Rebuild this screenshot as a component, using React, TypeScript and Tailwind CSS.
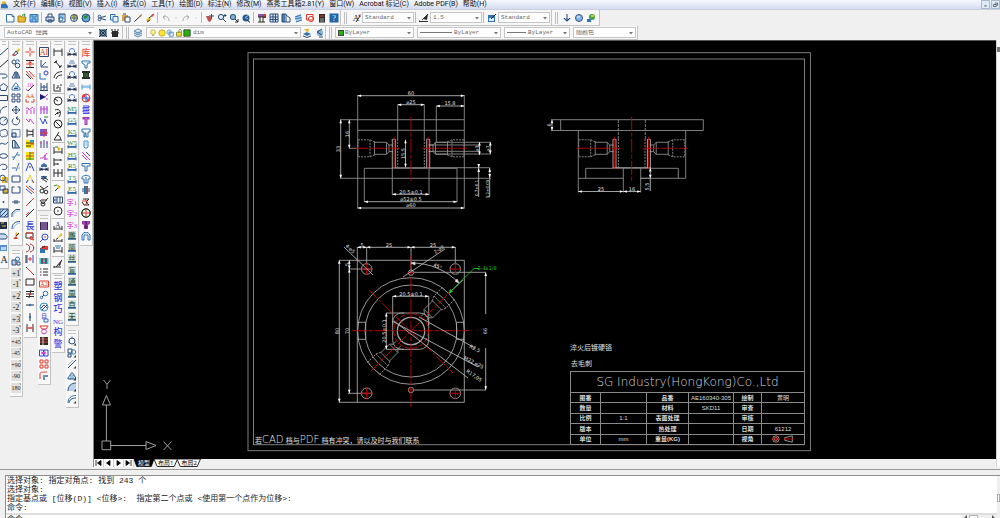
import { useState } from "react";
import type { ReactNode } from "react";

type Stroke = [color: string, d: string, fill?: boolean];
interface Glyph {
  name: string;
  paths: Stroke[];
  text?: { value: string; color: string; size: number; y: number };
}

const NAVY = "#2b4a78";
const BLUE = "#2f74b8";
const SKY = "#8ec3ee";
const RED = "#e8382c";
const PINK = "#d63cd6";
const GREEN = "#2c8a3a";
const INK = "#2c2c2c";
const GOLD = "#e9b92b";
const GRAY = "#a8a8a8";

const ring = (x: number, y: number, r: number) =>
  `M${x - r} ${y}a${r} ${r} 0 1 0 ${r * 2} 0a${r} ${r} 0 1 0 ${-r * 2} 0`;

const g = (name: string, ...paths: Stroke[]): Glyph => ({ name, paths });
const t = (name: string, value: string, color: string, size = 8, y = 8, ...paths: Stroke[]): Glyph => ({
  name, paths, text: { value, color, size, y },
});

const carBase: Stroke[] = [["#1c2c50", "M1 5.5V9M9 5.5V9M1 7.3H9"], ["#1c2c50", "M1 7.3L3.5 5.5V9ZM9 7.3L6.5 5.5V9Z", true]];
const blueBase: Stroke[] = [["#3566ad", "M1 6V9.4M9 6V9.4"], ["#3566ad", "M1 7H9V8.8H1Z", true]];

const STANDARD: Glyph[][] = [
  [
    g("新建", ["#ffffff", "M1.5 1H7L9 3V9H1.5Z", true], [BLUE, "M1.5 1.5H7L9 3.5V9H1.5ZM7 1.5V3.5H9"]),
    g("打开", [GOLD, "M1 3H4L5 4H9L8 9H1Z", true], ["#a97c12", "M1 3H4L5 4H9L8 9H1Z"], [GREEN, "M5 2.5L8 1L7.5 3.5"]),
    g("保存", [SKY, "M1 1H9V9H1Z", true], [BLUE, "M1 1.5H9V9H1ZM3 1.5V4H7V1.5M3 9V6H7V9"]),
  ],
  [
    g("打印", ["#c9d3e2", "M1 4H9V8H1Z", true], [NAVY, "M3 4V1H7L7 4M1 4H9V8H1ZM3 7H7V9H3Z"]),
    g("打印预览", [SKY, "M2 1H7V6H2Z", true], [NAVY, "M2 1H8V9H2Z"], [BLUE, ring(4, 6, 2)]),
    g("发布", [GOLD, ring(6, 4, 3), true], [NAVY, ring(5, 5, 3.5)], [BLUE, "M2 5H8M5 1.5V8"]),
    g("三维DWF", ["#5fa8dc", ring(5, 5, 4), true], [GREEN, "M3 3L7 2L6 5L3 6Z", true], [NAVY, ring(5, 5, 4)]),
  ],
  [
    g("剪切", [NAVY, "M4 4.5L9 3M4 5.5L9 7"], [NAVY, ring(2.5, 3.5, 1.3)], [NAVY, ring(2.5, 6.5, 1.3)]),
    g("复制", ["#e6f1fb", "M1 1H6V7H1Z", true], [BLUE, "M1.5 1.5H6V7H1.5Z"], ["#e6f1fb", "M4 3H9V9H4Z", true], [BLUE, "M4 3.5H9V9H4Z"]),
    g("粘贴", ["#d9a54a", "M1 2H7V8H1Z", true], ["#ffffff", "M4 4H9V9H4Z", true], [NAVY, "M4 4H9V9H4ZM2 1H5"]),
    g("特性匹配", [INK, "M1.5 8.5L8.5 2"], ["#b98a2c", "M6 3L9 1L8 4Z", true]),
    g("块编辑器", [GOLD, "M1 7L4 4L6 6L3 9Z", true], [INK, "M4 5L9 1M2 9L5 7"], [RED, "M6 2L9 1L8 4Z", true]),
  ],
  [
    g("放弃", [GRAY, "M8 8C8 4 6 3 2 4M2 4L4.5 2M2 4L4 6.5"]),
    g("放弃列表", [GRAY, "M4 4.5H6L5 6Z", true]),
    g("重做", [GRAY, "M2 8C2 4 4 3 8 4M8 4L5.5 2M8 4L6 6.5"]),
    g("重做列表", [GRAY, "M4 4.5H6L5 6Z", true]),
  ],
  [
    g("实时平移", [NAVY, "M4 3H9M6.5 1V6"], ["#c0504d", "M1 3H5L7 6L5 9L3 8Z", true]),
    g("实时缩放", ["#dcecfa", ring(4, 4, 3), true], [NAVY, ring(4, 4, 2.6)], [NAVY, "M6 6L9 9M8 1V4M6.5 2.5H9.5"]),
    g("窗口缩放", ["#7fb3df", ring(4, 4, 3), true], [NAVY, ring(4, 4, 2.6)], [INK, "M6 6L9 9M6 9H9V6"]),
    g("缩放上一个", ["#2b5a8c", ring(5, 5, 3.5), true], [SKY, "M8 2L4 4.5L7 6"], [INK, "M6 7L9 9.5"]),
  ],
  [
    g("特性", ["#8557a7", "M1 1H6V4H1Z", true], [RED, "M6 1H9V5H6Z", true], [INK, "M1 4H9M3 4V9M6 4V9M1 9H8"]),
    g("设计中心", ["#dce8f5", "M1 1H9V9H1Z", true], [NAVY, "M1 1H9V9H1ZM1 4H9M4 1V9M6.5 1V9M1 6.5H9"]),
    g("工具选项板", ["#4c78ad", "M1 1H4V9H1Z", true], [NAVY, "M1 1H5V9H1ZM5 2L9 5V9H5"]),
    g("图纸集", ["#9fc9e8", "M2 3L8 1L9 7L3 9Z", true], [BLUE, "M2 4L8 2M2 6L8.5 4.5M3 9L9 7"]),
    g("标记集", ["#ffffff", "M1 1H8V8H1Z", true], [RED, "M1.5 1.5H8V7H1.5Z"], [RED, ring(6, 6, 2.6)]),
    g("计算器", [INK, "M2 1H8V9.5H2Z", true], ["#8b2f2a", "M3 2H7V4H3Z", true], [GRAY, "M3 6H7M3 8H7"]),
  ],
  [t("帮助", "?", "#ffffff", 8, 8, ["#1f66a8", "M0.5 0.5H9.5V9.5H0.5Z", true])],
];

const EXPRESS: Glyph[] = [
  g("移动三维", ["#7fa9d8", "M5 9L1 5.5H9Z", true], [NAVY, "M5 1V8M2 5L5 8L8 5"]),
  g("旋转三维", ["#79b2e6", ring(5, 5, 3), true], [NAVY, ring(5, 5, 3.5)], ["#ffffff", "M3 4H6"]),
  g("对齐三维", ["#43a047", ring(6, 4, 3), true], [BLUE, "M1 6H5V9H1Z", true], [GOLD, "M5 2H8V4H5Z", true]),
];

const DRAW: Glyph[] = [
  g("直线", [NAVY, "M1 8L9 1"]),
  g("构造线", [INK, "M0 9L9 1"]),
  g("多段线", [NAVY, "M0 4H5C9 4 9 8 5 8H3"]),
  g("正多边形", [NAVY, "M4.5 1.5L8.5 4.5L7 8.5H2L0.5 4.5Z"]),
  g("矩形", [NAVY, "M0 2.5H8.5V7.5H0"]),
  g("圆弧", [NAVY, "M1 8.5C1 4 4 2 8 1.5"]),
  g("圆", [NAVY, ring(4.5, 5, 4)], [BLUE, "M4.5 5L7 3"]),
  g("修订云线", [NAVY, "M1 6C0 3 2 2 4 2C7 0 9 3 8 5C10 7 7 9 5 8C3 10 1 8 1 6"]),
  g("样条曲线", [NAVY, "M0 7C3 0 5 9 9 3"]),
  g("椭圆", [NAVY, "M0.5 5C1 2 8 2 8.5 5C8 8 1 8 0.5 5"]),
  g("椭圆弧", [NAVY, "M1 4C2 1 8 2 8 5C8 8 4 8 3 7"]),
  g("插入块", [GOLD, "M3 3H9V9H3Z", true], [NAVY, ring(3.5, 4, 2.8)], [BLUE, "M5 6L8 8"]),
  g("创建块", [GOLD, "M4 4H9V9H4Z", true], [NAVY, "M1 1H6V5H1ZM4 4H9V8H4Z"]),
  g("点", [NAVY, ring(4.5, 5, 1), true]),
  g("图案填充", ["#bcd8f2", "M1 1H9V9H1Z", true], [NAVY, "M1 9V1H9V9ZM1 5L5 1M1 9L9 1M5 9L9 5"]),
  g("渐变色", ["#1d2d4a", "M1 2H8V9H1Z", true], [GOLD, "M2 3H5M3 6H7"]),
  g("面域", ["#c9ddf0", ring(4, 5, 3.6), true], [NAVY, "M0 8V3H4C9 3 9 8 6 8Z"]),
  g("表格", ["#5a8fd0", "M0 2H8V8H0Z", true], ["#b8d4f5", "M2 4H7V7H2Z", true]),
  t("多行文字", "A", INK, 10, 9),
];

const MODIFY: Glyph[] = [
  g("删除", [GOLD, "M5 4L8 1L9 3L6 6Z", true], [NAVY, "M2 8L5 4L7 6L4 8.5Z"], [RED, "M1 8H4"]),
  g("复制对象", [NAVY, ring(3, 3, 2)], [NAVY, ring(6.5, 6.5, 2.3)], [BLUE, "M5 1H8V3"]),
  g("镜像", [SKY, "M6 8V2L9 8Z", true], [NAVY, "M4 8V2L1 8ZM6 8V2L9 8ZM5 1V9"]),
  g("偏移", [SKY, "M3 6H7V4H4Z", true], [BLUE, "M1 8H9C9 5 8 5 7 5C7 0 3 0 3 4C1 4 1 6 1 8Z"], [NAVY, "M3 6.5H7"]),
  g("阵列", [NAVY, "M1 1H4V4H1ZM6 1H9V4H6ZM1 6H4V9H1ZM6 6H9V9H6Z"]),
  g("移动", [NAVY, "M5 1V9M1 5H9M3.5 2.5L5 1L6.5 2.5M3.5 7.5L5 9L6.5 7.5M2.5 3.5L1 5L2.5 6.5M7.5 3.5L9 5L7.5 6.5"]),
  g("旋转", [NAVY, "M2.5 2.5C-1 6 3 10 6.5 8.5C10 6 9 2 5 2M5 2L7 0.5M5 2L7 4"]),
  g("缩放", ["#c6dcf2", "M1 5H5V9H1Z", true], ["#6f8fb4", "M1 1.5H9V9H1Z"], [NAVY, "M1 5H5V9H1Z"]),
  g("拉伸", ["#9fc4e8", "M4 2L9 9H4Z", true], [NAVY, "M1.5 1.5H4L8.5 9H1.5ZM4 2V9"]),
  g("修剪", [BLUE, "M1 6H4M6 4H9M2 9L7 1"]),
  g("延伸", [BLUE, "M1 6H5M5 9L8 1"], [GRAY, "M6 6H9"]),
  g("打断于点", [NAVY, "M1 2H9V8H1Z"], [SKY, "M4 2H6"]),
  g("打断", [NAVY, "M3.5 2H1V8H9V2H6.5"]),
  g("合并", [NAVY, "M1 5H9M4 3V7M6 3V7"]),
  g("倒角", [NAVY, "M1 9V5L5 1.5H9"], [SKY, "M2 9V6L6 3H9"]),
  g("圆角", [NAVY, "M1 9C1 4 4 1.5 9 1.5"], [SKY, "M2.5 9C3 6 5 3.5 9 3"]),
  g("分解", [RED, "M2 8L5 5L7 8Z", true], [GOLD, "M5 1L8 3L6 6L4 4Z", true], [INK, "M5 5L8 2"]),
];

const ROTATE: Glyph[] = [
  g("旋转工具", ["#b9d7f1", "M1 4H5V9H1Z", true], [BLUE, ring(6.5, 3, 2)], [NAVY, "M1 4H5V9H1ZM6 6H9V9H6Z"]),
  ...["+1", "-1", "+2", "-2", "+3", "-3"].map((s) =>
    t(`偏移 ${s}`, s, "#222222", 8, 7.5, ["#e2e0dc", "M0 0H10V10H0Z", true], [INK, "M8 0.5H9.5V2Z", true])),
  ...["+45", "-45", "+90", "-90", "180"].map((s) =>
    t(`旋转 ${s}`, s, "#222222", 6, 7, ["#e2e0dc", "M0 0H10V10H0Z", true], [INK, "M8.5 0.5H9.5V2Z", true])),
];

const YANXIU: Glyph[] = [
  g("中心线", [RED, "M5 0.5V4M5 6V9.5M0.5 5H4M6 5H9.5M4.5 5H5.5"]),
  g("对称线", [INK, "M1 1.5H9M1 8.5H9"], [RED, "M1 5H9M5 2V8M3.5 3.5H6.5"]),
  g("平行线", [RED, "M1 1L8 9M4 1L9.5 7"], [INK, "M1 4L6 9"]),
  t("长度", "10", PINK, 6, 4.5, [INK, "M3 9L9 3"], [PINK, "M1 7L3 9"]),
  t("字高", "AA", RED, 6, 5, [RED, "M1 6V9H4M9 6V9H6"]),
  g("折线一", [PINK, "M1 3H3L4 5L8 2M2 9V5M6 9V5M9 9V3"]),
  g("折线二", [PINK, "M1 3L4 6L5 3L9 8"]),
  g("管道", [INK, "M2 1V9M8 1V9M2 3L8 3.5M2 7L8 6.5"]),
  g("图层一", ["#ffe600", "M1 1H9V9H1Z", true], ["#29a0d8", "M5 1H9V3H5Z", true], [INK, "M1 4H9M1 7H6"], [RED, "M5 5H9"]),
  g("图层二", ["#ffe600", "M1 1H9V9H1Z", true], [RED, "M4 2H9M1 5H9"], [GREEN, "M1 8H9M5 1V9"]),
  g("角度一", ["#3046d8", "M1 9L4 1L6 2L9 9"], [INK, "M4 5H6"]),
  g("角度二", ["#f2d21f", "M2 9L5 1L8 9"], ["#3046d8", "M1 9L3 6M9 9L7 6"]),
  g("斜线", [RED, "M1 1L9 8"], ["#3046d8", "M1 4L7 9M4 1L9 5"]),
  g("线一", [RED, "M1 9L9 1"], [INK, "M4 6L6 4"]),
  g("线二", [INK, "M1 9L9 1"], [RED, "M1 7L4 4"]),
  t("长", "長", "#4040e0", 9, 8.5),
  g("框选", [INK, "M1 2H8V7H1Z"], [RED, "M1 2H8M6 5L9 9L5 8Z"]),
  g("括弧", ["#9c2a2a", "M1 1C6 2 6 8 1 9M5 1C10 2 10 8 5 9"]),
  g("等分一", ["#3046d8", "M2 1V9M8 1V9"], [RED, "M3 5H7M5 3V7"], [INK, "M1 1V9"]),
  g("斜连", [INK, "M1 1L9 9"], [RED, "M2 2L8 8"]),
  g("框", [INK, "M1 2H9V8H1Z"], [RED, ring(9, 2, 0.7), true], [RED, ring(1, 8, 0.7), true]),
  g("三线", [INK, "M1 2.5H9M1 5H9M1 7.5H9M6 1L4 9"], [RED, "M3 5H6"]),
  g("中点", [INK, "M1 5H9"], [BLUE, ring(5, 5, 1.2), true]),
  g("竖中点", [INK, "M5 1V9"], [BLUE, ring(5, 5, 1.2), true]),
  g("夹线", [INK, "M2 1V9M8 1V9"], [RED, "M2 5H8M4 4V6M6 4V6"]),
];

const TEXTTOOLS: Glyph[] = [
  t("文字替换", "AI", RED, 8, 8, [NAVY, "M0.5 0.5H9.5V9.5H0.5Z"]),
  g("坐标", [NAVY, "M2 1V8H9"], [BLUE, "M2 8L7 3"]),
  g("编号圆", [BLUE, "M1 3V9H7"], ["#3046d8", ring(7, 3, 2)]),
  g("基线", [NAVY, "M1 8.5H9M2 1V8M5 3V8M8 1V8M2 5H8"]),
  g("焊接", ["#1b1b80", "M1 1V7L7 4Z", true], [PINK, "M6 4L9 1M7 6H9"]),
  g("分段", ["#8a2be2", "M2 1V9M5 1V9M8 1V9"], [PINK, "M1 4H9"]),
  g("粗糙度", ["#3046d8", "M1 2L4 8L6 3L8 8"], [GREEN, "M5 1H9"]),
  g("网格", ["#7a5ad0", "M1 1H8V8H1Z", true], [RED, "M1 5H9M5 1V9"]),
  g("箭头组", [NAVY, "M2 2V9M5 1V9M8 2V9"], [PINK, "M1 4H3M7 4H9"]),
  g("拐点", [PINK, "M1 7H4L8 2M5 8H9"], ["#8a2be2", "M6 4V9"]),
  g("车一", ["#3f6da8", "M2 3L5 1L8 3V5H2Z", true], ...carBase),
  g("车二", ["#3f6da8", "M2 2H8L7 5H3Z", true], [INK, "M2 4L8 8M4 2L9 6"]),
  g("查找", [INK, ring(3, 6, 2)], [INK, ring(7, 7, 1.8)], [INK, "M1 1L5 4L9 1"]),
  g("勾选", [INK, "M1 3L4 7L9 1M2 3H8"], [INK, ring(4, 7, 2)]),
];

const LAYOUTTOOLS: Glyph[] = [
  g("条码", ["#3b2250", "M1 1H9V9H1Z", true], ["#b28bd0", "M3 1V9M5 1V9M7 1V9"]),
  g("放大", ["#3046d8", ring(6, 4, 3)], ["#3046d8", "M4 6L1 9"], [RED, "M5 4H7"]),
  g("色块", [RED, "M3 2H9V6H3Z", true], [BLUE, "M1 5H6V9H1Z", true], [INK, "M1 5L6 2"]),
  g("符号", ["#45c1d8", "M0.5 2H9.5V8H0.5Z", true], [RED, ring(5, 5, 2)], [INK, "M3 2V8M7 2V8"]),
  g("列表", [INK, "M1 2H2.5M4 2H9M1 5H2.5M4 5H9M1 8H2.5M4 8H9"]),
  t("编号", "A2", RED, 6, 7, [RED, "M0.5 2H9.5V8H0.5Z"]),
  g("连接", [BLUE, ring(6.5, 3.5, 2.3)], [BLUE, ring(2.5, 7.5, 1.2)], [NAVY, "M3 7L5 5"]),
  g("转动", ["#2b8fd0", ring(5, 5, 4)], [NAVY, "M2 6L5 3L8 6M3 8L8 3"]),
  t("自动", "自", "#7048d8", 6, 5, [BLUE, "M5 6H9V9H5Z"]),
  g("漏斗", [RED, "M1 1H9L7 4H3Z"], [PINK, ring(5, 6.5, 2.4)]),
  g("表头", [INK, "M1 1H9V9H1Z", true], [RED, "M1 3H9M1 6H9"], ["#cccccc", "M4 1V9"]),
  g("双联", ["#3046d8", "M0.5 2H4.5V8H0.5ZM5 2H9V8H5Z"], [PINK, "M2 4L7 6M2 6L7 4"]),
  g("四框", [RED, "M1 1H4V4H1ZM6 1H9V4H6ZM1 6H4V9H1ZM6 6H9V9H6Z"]),
  g("钩形", ["#6d8fb5", "M4 4H9V6H6V9H4Z", true], [RED, "M1 8V3C1 1 3 1 8 1"]),
];

const DIM: Glyph[][] = [
  [
    g("线性", [INK, "M1 1.5V9M9 1.5V9M1 4H9"]),
    g("对齐", [INK, "M3 3L7 8M1 4L4 1.5M6 9L9 6.5"], [INK, ring(3, 3, 1), true], [INK, ring(7, 7.5, 1), true]),
    g("弧长", [INK, "M1 8C2 3 5 2 9 1.5M3 9C4 6 6 5 9 5"]),
    g("坐标标注", [INK, "M1 2V9H8M3 6H5V3M7 5V8M7 3H9"]),
  ],
  [
    g("半径", [INK, ring(5, 5, 4)], [INK, "M5 5L2 3"]),
    g("折弯", [INK, "M2 2C7 0 9 4 6 9M2 7L5 4L4 6L7 4"]),
    g("直径", [INK, ring(5, 5, 4)], [INK, "M2 2L8 8"]),
    g("角度", [INK, "M9 9H1L6 1M7 9C8 6 7 5 4 4"]),
  ],
  [
    g("快速标注", [INK, "M1 2V9M9 3V9M1 7H9"], [GOLD, "M4 1L8 4L5 6Z", true], [GREEN, "M2 2H5"]),
    g("基线标注", [INK, "M1 1V9M1 3H8M1 7H5M8 2V4M5 6V8"]),
    g("连续标注", [INK, "M1 1V9M5 1V9M9 1V9M1 5H9"]),
  ],
  [
    g("快速引线", [INK, "M2 8L7 3"], [GOLD, "M4 1L8 4L5 6Z", true], [GREEN, "M1 3L4 2"]),
    g("公差", [NAVY, "M0.5 2H9.5V8H0.5ZM4 2V8M7 2V8"], [BLUE, ring(2.3, 5, 1)]),
    g("圆心标记", [INK, ring(5, 5, 4)], [INK, ring(5, 5, 0.8), true]),
  ],
  [
    t("编辑标注", "A", NAVY, 8, 7, [INK, "M1 5V9M9 5V9M1 8H9"]),
    g("编辑文字", [INK, "M1 6V9M9 6V9M1 8H9"], [GOLD, "M4 6L8 0L9.5 2Z", true], [INK, "M3 6.5L5 5"]),
    g("更新标注", [INK, "M1 3V9M9 3V9M1 7H9"], [BLUE, "M2 2H8M3 4H7"]),
  ],
  [g("标注样式", [INK, "M1 7V9M1 8H8M3 8L9 1"], [INK, "M5 6L9 1L7 7Z", true])],
];

const HANZI: Glyph[] = ["塑", "钢", "巧", "NG", "构", "警"].map((s) => t(s, s, "#3b3be0", s === "NG" ? 7 : 9, 8.3));

const CARS: Glyph[] = [
  ...["线性", "半宽", "全长", "重置", "更新"].map((s, i) =>
    g(`标注${s}`, [i % 2 ? "#5f86bd" : "#3f77c0", i % 2 ? "M2 4H8M3 2H7" : "M2.5 5V3.5C2.5 1 7.5 1 7.5 3.5V5"], ...carBase)),
  ...["M", "G", "K", "W", "H", "R", "T", "E"].map((s) => t(`符号 ${s}`, s + "5", GREEN, 7, 5.5, ...blueBase)),
  ...["字1", "字2", "字3"].map((s) => t(s, s, "#e046e0", 7, 7.5)),
  ...["雕", "简", "丝", "盲", "通", "周", "自", "无"].map((s) =>
    t(`${s}孔`, s, "#2f5c3c", 7, 6.6, ["#d8ddd8", "M1 0H9V7H1Z", true], ...blueBase.slice(1))),
];

const SNAP: Glyph[] = [
  g("圆阵", [NAVY, ring(5, 5, 3)], [BLUE, "M5 0.5V3M1 6H3"], [INK, "M9 7V9.5H6.5Z", true]),
  g("排列", [NAVY, "M1 1H5V5H1ZM1 6H4V9H1Z"], [BLUE, ring(6.5, 4, 2.2)], [INK, "M9 7V9.5H6.5Z", true]),
  g("斜切", [NAVY, "M1 9L9 1"], [GRAY, "M1 6L6 1"], [INK, "M9 7V9.5H6.5Z", true]),
  g("凸台", [SKY, "M2 8L5 2L8 8Z", true], [NAVY, "M1 8C1 5 3 5 3 5C3 1 7 1 7 5C9 5 9 8 8 8Z"], [INK, "M9 7V9.5H6.5Z", true]),
  g("倒圆一", ["#b6d2ee", "M1 9C1 4 4 1 9 1V9Z", true], [NAVY, "M1 9C1 4 4 1 9 1"], [INK, "M9 7V9.5H6.5Z", true]),
  g("倒圆二", [BLUE, "M1 9C1 4 4 1.5 9 1.5"], [NAVY, "M2 9C2 6 5 4 9 4"], [INK, "M9 7V9.5H6.5Z", true]),
];

const MOLD: Glyph[] = [
  t("模架库", "库", "#f04a43", 9, 8.5),
  g("螺钉一", [BLUE, "M1 2H9V4H7L6 6V9H4V6L1 4Z"], [SKY, "M3 3H7"]),
  g("模仁", [INK, "M1 1H9V3H8V7H9V9H1V7H2V3H1Z", true], [GREEN, "M3 4H7M3 6H7"]),
  g("水路", ["#3e94dc", "M1 2.5V7.5M9 2.5V7.5M1 5H9"], [SKY, "M2 4H8"]),
  g("浇口", [RED, ring(5, 5, 4)], ["#3046d8", "M5 1V9M1 5H9"], [RED, "M2 2H4V4H2ZM6 6H8V8H6Z", true]),
  g("弹簧", ["#4b4bea", "M2 1H8V2.5H2V4H8V5.5H2V7H8V8.5H2"]),
  g("螺丝", ["#9f3faf", "M1.5 1H8.5V3.5H6.5V9H3.5V3.5H1.5Z", true], ["#d38be0", "M5 2V8"]),
  g("顶针", [BLUE, "M1 1H9V4H7V9H5V5H4V9H3V4H1Z"]),
  g("拉杆", ["#3e94dc", "M3 2H7V8L6 9H4L3 8Z"], [SKY, "M5 3V7"]),
  g("斜顶", [PINK, "M1 1L9 9M1 4L6 9"], ["#3046d8", "M5 1L9 5"]),
  g("滑块", [BLUE, "M1 1.5H9V4H6V9H4V4H1Z"]),
  g("定位圈", [BLUE, "M1 5V3C2 1 8 1 9 3V5H7V9H3V5ZM5 3V9"]),
  g("导柱", ["#1d79a8", "M3 1H7V9H3Z", true], [NAVY, "M2 3V7M8 3V7"], [RED, "M5 1V9"]),
  g("冷却", [INK, "M2 2H8L5 5L8 8H3L1 5"], [RED, "M4 2L7 6L3 8M1 4H5"]),
  g("定位", [GREEN, ring(5, 5, 4)], [RED, "M5 1V9M1 5H9"], [INK, ring(5, 5, 4.4)]),
  g("紫螺丝", ["#9f3faf", "M1 1H9V4L7 5V9H3V5L1 4Z", true], ["#3b2250", "M5 1V9M3 7H7"]),
  g("支架", [BLUE, "M1 9V4L3 1.5H7L9 4V9H7V4H3V9Z"], [SKY, "M5 1V4"]),
];

const MENUS = [
  "文件(F)", "编辑(E)", "视图(V)", "插入(I)", "格式(O)", "工具(T)", "绘图(D)", "标注(N)", "修改(M)",
  "燕秀工具箱2.81(Y)", "窗口(W)", "Acrobat 标记(C)", "Adobe PDF(B)", "帮助(H)",
];

function Icon({ glyph }: { glyph: Glyph }) {
  return (
    <svg viewBox="0 0 10 10" className="size-[10px]" aria-hidden="true">
      {glyph.paths.map(([color, d, fill], i) => (
        <path key={i} d={d} fill={fill ? color : "none"} stroke={fill ? "none" : color} strokeWidth={1} />
      ))}
      {glyph.text && (
        <text x={5} y={glyph.text.y} textAnchor="middle" fontSize={glyph.text.size} fill={glyph.text.color} className="font-['Liberation_Serif','Noto_Sans_CJK_SC',serif] font-medium">
          {glyph.text.value}
        </text>
      )}
    </svg>
  );
}

function ToolButton({ glyph, className = "" }: { glyph: Glyph; className?: string }) {
  return (
    <button type="button" aria-label={glyph.name} className={`flex shrink-0 items-center justify-center hover:bg-sky-200 ${className}`}>
      <Icon glyph={glyph} />
    </button>
  );
}

function Divider() {
  return <span className="mr-[2px] ml-px h-[11px] w-px shrink-0 bg-[#b9b9b9]" />;
}

function Grip() {
  return (
    <span className="mx-[3px] flex h-3 shrink-0 gap-px">
      <span className="w-px bg-[#c0c0c0]" />
      <span className="w-px bg-[#c0c0c0]" />
    </span>
  );
}

function Toolbar({ children }: { children: ReactNode }) {
  return <div className="flex h-full shrink-0 items-center border-r border-b border-[#c4c4c4] bg-[#f7f7f7]">{children}</div>;
}

interface DropProps {
  label: string;
  options: string[];
  className: string;
  children?: ReactNode;
}

function Drop({ label, options, className, children }: DropProps) {
  return (
    <div className={`flex h-[11px] shrink-0 items-center gap-px border border-[#c6c6c6] bg-white pl-[2px] ${className}`}>
      {children}
      <select
        aria-label={label}
        className="h-full min-w-0 flex-1 appearance-none bg-transparent font-['Liberation_Mono','Noto_Sans_CJK_SC',monospace] text-[6px] leading-none text-[#666] outline-none"
      >
        {options.map((o) => <option key={o}>{o}</option>)}
      </select>
      <svg viewBox="0 0 6 6" className="mr-px size-[6px] shrink-0" aria-hidden="true"><path d="M1 2H5L3 4.5Z" fill="#777" /></svg>
    </div>
  );
}

function Palette({ groups }: { groups: Glyph[][] }) {
  return (
    <div role="toolbar" className="flex flex-col items-center border-r border-b border-[#c3c3c3] bg-[#f8f8f8] pb-[3px]">
      <div className="mb-px flex h-1 w-full flex-col justify-between px-[2px]">
        <span className="h-px bg-[#c4c4c4]" />
        <span className="h-px bg-[#c4c4c4]" />
      </div>
      {groups.map((group, i) => (
        <div key={i} className={i > 0 ? "mt-px border-t border-[#bdbdbd] pt-px" : ""}>
          {group.map((glyph) => <ToolButton key={glyph.name} glyph={glyph} className="h-3 w-3 even:h-[11px]" />)}
        </div>
      ))}
    </div>
  );
}

const W = "#b4b4b4";

function Label({ x, y, rotate = 0, size = 5, color = "#e0e0e0", children }: { x: number; y: number; rotate?: number; size?: number; color?: string; children: ReactNode }) {
  return (
    <text x={x} y={y} fontSize={size} fill={color} stroke="none" textAnchor="middle" transform={rotate ? `rotate(${rotate} ${x} ${y})` : undefined}>
      {children}
    </text>
  );
}

/* Dimension line between two points with filled arrow heads at both ends */
function Dim({ x1, y1, x2, y2 }: { x1: number; y1: number; x2: number; y2: number }) {
  const angle = (Math.atan2(y2 - y1, x2 - x1) * 180) / Math.PI;
  return (
    <g stroke={W}>
      <path d={`M${x1} ${y1}L${x2} ${y2}`} />
      <path d="M0 0L3.5 -1.3V1.3Z" fill="#fff" stroke="none" transform={`translate(${x1} ${y1}) rotate(${angle})`} />
      <path d="M0 0L-3.5 -1.3V1.3Z" fill="#fff" stroke="none" transform={`translate(${x2} ${y2}) rotate(${angle})`} />
    </g>
  );
}

/* Nozzle profile pointing left, measured from the part's centre */
function Nozzle({ transform }: { transform: string }) {
  return (
    <g transform={transform} stroke="#8c8c8c">
      <path d="M-53 -8.5H-41V8.5H-53ZM-41 -8.5L-36.5 -6.5M-41 8.5L-36.5 6.5" strokeDasharray="2 1" />
      <path d="M-36.5 -7V7M-36.5 -6H-24.5V6H-36.5M-24.5 -6L-22 -3.3H-18M-24.5 6L-22 3.3H-18M-22 -3.3V3.3" />
    </g>
  );
}

function SideBores({ cx }: { cx: number }) {
  return (
    <g>
      <Nozzle transform={`translate(${cx} 148.3)`} />
      <Nozzle transform={`translate(${cx} 148.3) scale(-1 1)`} />
      <g stroke={W}>
        <path d={`M${cx - 18.7} 168V139.3H${cx - 15.7}V168M${cx + 18.7} 168V139.3H${cx + 15.7}V168`} />
        <path d={`M${cx - 13.3} 139V168M${cx + 13.3} 139V168`} strokeDasharray="2 1" stroke="#8c8c8c" />
      </g>
      <g stroke="#c80000">
        <path d={`M${cx - 17} 137V169M${cx + 17} 137V169`} />
        <path d={`M${cx - 55} 148.3H${cx - 11.5}M${cx + 11.5} 148.3H${cx + 56}`} strokeDasharray="12 1.5 3 1.5" />
        <path d={`M${cx} 116.7V181.3`} strokeDasharray="14 2 4 2" />
      </g>
    </g>
  );
}

function FrontView() {
  return (
    <g>
      <g stroke="#8c8c8c">
        <path d="M340 119.7H464.3M357.7 130.3H464.3M357.7 95V208.5M464.3 95V208.5M340 178.3H491" />
        <path d="M364.3 202V168.3H457V202M392.3 195V168M429 195V168M392 167.7H490" />
        <path d="M397.7 104.5V139M424.3 104.5V139M436.3 106V142M349 148.3H357" />
        <path d="M436 142.3H491M428 145H480M428 151.3H480M436 154H491" />
      </g>
      <SideBores cx={411} />
      <Dim x1={357.7} y1={95.7} x2={464.3} y2={95.7} />
      <Dim x1={397.7} y1={104.7} x2={424.3} y2={104.7} />
      <Dim x1={436.3} y1={106} x2={464.3} y2={106} />
      <Dim x1={340.7} y1={119.7} x2={340.7} y2={178.3} />
      <Dim x1={349.3} y1={119.7} x2={349.3} y2={148.3} />
      <Dim x1={405.5} y1={139.7} x2={405.5} y2={167.3} />
      <Dim x1={392.3} y1={194.3} x2={429} y2={194.3} />
      <Dim x1={364.3} y1={201.7} x2={457} y2={201.7} />
      <Dim x1={357.7} y1={208} x2={464.3} y2={208} />
      <Dim x1={479.5} y1={142} x2={479.5} y2={155} />
      <Dim x1={490.3} y1={142} x2={490.3} y2={154} />
      <path d="M478.7 164V197M489.7 168V197" stroke={W} />
      <path d="M478.7 168L477.4 172H480ZM478.7 168L477.4 164H480ZM489.7 168L488.4 172H491ZM489.7 178L488.4 174H491Z" fill="#fff" stroke="none" />
      <Label x={411} y={95}>60</Label>
      <Label x={411} y={104}>⌀25</Label>
      <Label x={450} y={105}>15,8</Label>
      <Label x={340} y={149} rotate={-90}>33</Label>
      <Label x={348.5} y={134} rotate={-90}>16</Label>
      <Label x={404.5} y={153.5} rotate={-90}>15,5</Label>
      <Label x={411} y={193.5}>20,5±0,1</Label>
      <Label x={411} y={201}>⌀52±0,5</Label>
      <Label x={411} y={207.3}>⌀60</Label>
      <Label x={478.5} y={148.5} rotate={-90}>⌀3</Label>
      <Label x={489.5} y={148.5} rotate={-90}>⌀7</Label>
      <Label x={477.5} y={188} rotate={-90} size={4}>0,7±0,1</Label>
      <Label x={488.7} y={189} rotate={-90} size={4}>5,2±0,05</Label>
    </g>
  );
}

function SideView() {
  return (
    <g>
      <g stroke="#8c8c8c">
        <path d="M551 119.7H703.3V130.5H551M560.7 119.7V130.5M578.3 130.5V192.5M685.7 130.5V178.3" />
        <path d="M578.3 178.3H623.3M640.7 178.3H685.7M585.7 178.3V168.3H678.3V178.3M613 167.5H651M623.3 168V192.5M640.7 168V192.5M640 178.3H651" />
        <path d="M618.3 120V139M645.3 120V139" strokeDasharray="3 1" />
      </g>
      <SideBores cx={631.7} />
      <Dim x1={552} y1={119.7} x2={552} y2={130.5} />
      <Dim x1={578.3} y1={191.5} x2={623.3} y2={191.5} />
      <Dim x1={623.3} y1={191.5} x2={640.7} y2={191.5} />
      <Dim x1={650.3} y1={168} x2={650.3} y2={178.3} />
      <path d="M650.3 178V191" stroke={W} />
      <Label x={551} y={125} rotate={-90}>6</Label>
      <Label x={601} y={191}>25</Label>
      <Label x={632} y={191}>16</Label>
      <Label x={649} y={186.5} rotate={-90}>5,5</Label>
    </g>
  );
}

function PlanView() {
  const holes = [[366.7, 269], [455.3, 269], [366.7, 393.3], [455.3, 393.3]];
  return (
    <g>
      <g stroke="#a6a6a6">
        <path d="M339 260.3H464.3V402.3H339M357.3 247V402.3M348 269H372M348 393.3H372M366.7 247V264M411 247V270M455.3 247V264" />
        <circle cx={411} cy={331} r={53.3} />
        <circle cx={411} cy={331} r={46} />
        <path d="M357.3 322.3H365.7V339.3H357.3M464.3 322.3H456.5V339.3H464.3" />
        <rect x={392.7} y={313} width={36} height={36.3} rx={9} />
        <circle cx={411} cy={331} r={13.7} strokeWidth={1.3} />
        {holes.map(([x, y]) => <circle key={`${x}-${y}`} cx={x} cy={y} r={5.3} />)}
        <circle cx={411} cy={272.7} r={2.7} />
        <circle cx={411} cy={390} r={2.7} />
        <path d="M392.7 296V325M428.7 296V325M386 313H404M386 349.3H404M411 272.3H486M414 390H486" />
      </g>
      <Nozzle transform="translate(411 331) rotate(-45)" />
      <Nozzle transform="translate(411 331) rotate(135)" />
      <g stroke="#c80000">
        <path d="M352.7 330.7H469.3M411 255V408" strokeDasharray="14 2 4 2" />
        <path d="M369 290L453 373M371 371L449 293" strokeDasharray="12 2 3 2" />
        <circle cx={411} cy={331} r={17.3} strokeDasharray="5 2" />
        {holes.map(([x, y]) => <path key={`${x}-${y}`} d={`M${x - 6} ${y}H${x + 6}M${x} ${y - 6}V${y + 6}`} />)}
        <path d="M408 272.7H414M408 390H414" />
      </g>
      <Dim x1={357.3} y1={247.3} x2={366.7} y2={247.3} />
      <Dim x1={366.7} y1={247.3} x2={411} y2={247.3} />
      <Dim x1={411} y1={247.3} x2={455.3} y2={247.3} />
      <Dim x1={339.3} y1={260.3} x2={339.3} y2={402.3} />
      <Dim x1={349.3} y1={260.3} x2={349.3} y2={269} />
      <Dim x1={349.3} y1={269} x2={349.3} y2={393.3} />
      <Dim x1={392.7} y1={296.3} x2={428.7} y2={296.3} />
      <Dim x1={386.3} y1={313} x2={386.3} y2={349.3} />
      <path d="M485.7 272.5V314M485.7 348V390" stroke={W} />
      <path d="M485.7 272.3L484.4 276H487ZM485.7 390L484.4 386.3H487Z" fill="#fff" stroke="none" />
      <g stroke={W}>
        <path d="M344 247L373 275M403 277L445 249M411 263C430 263 446 270 459 283" />
        <path d="M419 317L475 348M392 321L478 367M394 321L468 378M449 293L463 280" />
        <path d="M411 263L415 262V265ZM459 283L455 281.3L457 279Z" fill="#fff" />
      </g>
      <g stroke="#20c020">
        <path d="M449 293L474 268.5H479" />
        <path d="M449 293L450.5 289.5L452.5 291.5Z" fill="#20c020" />
      </g>
      <Label x={362} y={246.5}>5</Label>
      <Label x={389} y={246.5}>25</Label>
      <Label x={433} y={246.5}>25</Label>
      <Label x={338.5} y={331} rotate={-90}>80</Label>
      <Label x={348.5} y={331} rotate={-90}>70</Label>
      <Label x={348.5} y={264.5} rotate={-90}>5</Label>
      <Label x={487} y={331} rotate={-90}>66</Label>
      <Label x={411} y={295.5}>20,5±0,1</Label>
      <Label x={385.5} y={331} rotate={-90}>20,5±0,1</Label>
      <Label x={349} y={250} rotate={43}>4-⌀5</Label>
      <Label x={440} y={251} rotate={-33}>2-⌀2</Label>
      <Label x={437} y={268} rotate={22}>45°</Label>
      <Label x={474} y={350} rotate={27}>R2,5</Label>
      <Label x={473} y={364} rotate={27}>M22,⌀25</Label>
      <Label x={473} y={377} rotate={35}>R17,05</Label>
      <Label x={487} y={270} color="#20c020">2-4x1/8</Label>
    </g>
  );
}

const TITLE_ROWS: [string, string, string, string, string, string][] = [
  ["图番", "", "品番", "AE160340-305", "绘制", "黄明"],
  ["数量", "", "材料", "SKD11", "审查", ""],
  ["比例", "1:1", "表面处理", "", "审核", ""],
  ["版本", "", "热处理", "", "日期", "61212"],
  ["单位", "mm", "重量(KG)", "", "视角", "symbol"],
];

function TitleBlock() {
  return (
    <foreignObject x={570} y={371} width={235} height={74}>
      <table className="h-full w-full table-fixed border-collapse text-center font-['Liberation_Sans','Noto_Sans_CJK_SC',sans-serif] text-[6px] leading-none text-[#dcdcdc]">
        <colgroup>
          <col className="w-[30px]" />
          <col className="w-[46px]" />
          <col className="w-[42px]" />
          <col className="w-[45px]" />
          <col className="w-[28px]" />
          <col />
        </colgroup>
        <thead>
          <tr>
            <th colSpan={6} className="h-[21px] border border-[#8a8a8a] p-0 font-['DejaVu_Sans',sans-serif] text-[12px] font-extralight text-[#d8d8d8]">
              SG Industry(HongKong)Co.,Ltd
            </th>
          </tr>
        </thead>
        <tbody>
          {TITLE_ROWS.map((row) => (
            <tr key={row[0]} className="h-[10px]">
              {row.map((cell, i) => (
                <td key={i} className={`border border-[#8a8a8a] p-0 whitespace-nowrap ${i % 2 === 0 ? "font-bold" : ""}`}>
                  {cell === "symbol" ? (
                    <svg viewBox="0 0 26 9" className="mx-auto h-2 w-[26px]" aria-label="第一角投影" fill="none" stroke="#c8c8c8" strokeWidth={0.8}>
                      <circle cx={5} cy={4.5} r={3.6} />
                      <circle cx={5} cy={4.5} r={1.8} />
                      <path d="M15 3L23.5 1V8L15 6Z" />
                      <path d="M0.5 4.5H9.5M5 0V9M14 4.5H25" stroke="#e00000" strokeWidth={1} />
                    </svg>
                  ) : cell}
                </td>
              ))}
            </tr>
          ))}
        </tbody>
      </table>
    </foreignObject>
  );
}

function Drawing() {
  return (
    <svg viewBox="94 41 902 418" className="block h-full w-full font-['DejaVu_Sans','Noto_Sans_CJK_SC',sans-serif]" fill="none" strokeWidth={0.9}>
      <rect x={248} y={52.7} width={562.4} height={398} stroke="#8a8a8a" />
      <rect x={253.5} y={59} width={551} height={385.7} stroke="#8a8a8a" />
      <FrontView />
      <SideView />
      <PlanView />
      <TitleBlock />
      <g fill="#e2e2e2">
        <text x={570} y={350} fontSize={7}>淬火后镀硬铬</text>
        <text x={571} y={366} fontSize={7}>去毛刺</text>
        <text x={255} y={443} fontSize={7}>
          若<tspan fontSize={10} className="font-extralight">CAD</tspan> 档与<tspan fontSize={10} className="font-extralight">PDF</tspan> 档有冲突，请以及时与我们联系
        </text>
      </g>
      <g stroke="#b0b0b0">
        <path d="M102 441H110.7V449.7H102ZM106.4 441V405M102.5 405H110.5L106.4 395.5ZM110.7 445.5H146M146 441.5V449.5L156 445.5Z" />
        <path d="M103.5 380L107 384.3L110.5 380M107 384.3V389M163.5 441.5L171.5 450M171.5 441.5L163.5 450" />
      </g>
    </svg>
  );
}

function LayoutTabs() {
  const [active, setActive] = useState("模型");
  const nav: [string, string][] = [
    ["第一个", "M2 1V7M7 1.5L3.5 4L7 6.5Z"],
    ["上一个", "M6 1.5L2.5 4L6 6.5Z"],
    ["下一个", "M3 1.5L6.5 4L3 6.5Z"],
    ["最后一个", "M7 1V7M2 1.5L5.5 4L2 6.5Z"],
  ];
  return (
    <div className="flex h-2 shrink-0 items-stretch bg-[#f0f0f0]">
      {nav.map(([name, d]) => (
        <button key={name} type="button" aria-label={name} className="w-[10px] border-r border-[#d0d0d0] bg-white">
          <svg viewBox="0 0 9 8" className="h-2 w-[9px]"><path d={d} fill="#000" stroke="#000" strokeWidth={0.8} /></svg>
        </button>
      ))}
      {["模型", "布局1", "布局2"].map((tab) => (
        <button
          key={tab}
          type="button"
          onClick={() => setActive(tab)}
          className={`relative px-1 text-[6px] leading-none ${tab === active ? "text-white" : "text-black"}`}
        >
          <svg viewBox="0 0 22 8" preserveAspectRatio="none" className="absolute inset-0 h-full w-full" aria-hidden="true">
            <path d="M0 0H22L19 7.5H3Z" fill={tab === active ? "#000" : "#fff"} stroke="#000" strokeWidth={0.8} />
          </svg>
          <span className="relative">{tab}</span>
        </button>
      ))}
    </div>
  );
}

function CommandWindow() {
  const history = [
    "选择对象: 指定对角点: 找到 243 个",
    "选择对象:",
    "指定基点或 [位移(D)] <位移>:  指定第二个点或 <使用第一个点作为位移>:",
    "命令:",
  ];
  return (
    <section className="shrink-0 bg-[#f0f0f0] font-['Liberation_Mono','Noto_Sans_CJK_SC',monospace] text-[8px] leading-[9px] text-[#222]">
      <div className="mt-[2px] h-px bg-[#9b9b9b]" />
      <div className="h-[5px]" />
      <div className="ml-[5px] flex border-t border-l border-[#8f8f8f] bg-white">
        <div className="min-w-0 flex-1">
          <div className="h-[37px] pl-px">
            {history.map((line, i) => <p key={i} className="whitespace-pre">{line}</p>)}
          </div>
          <div className="flex h-[5px] overflow-hidden border-t-2 border-[#dedede] pl-px">
            <label htmlFor="command">命令:</label>
            <input id="command" className="h-[9px] min-w-0 flex-1 outline-none" />
            <div className="flex h-[9px] w-[35px] justify-between bg-[#efefef]">
              <svg viewBox="0 0 6 9" className="w-[6px]"><path d="M5 0L2 3L5 6Z" fill="#555" /></svg>
              <span className="mr-3 w-[9px] border border-[#b5b5b5] bg-white" />
              <svg viewBox="0 0 6 9" className="w-[6px]"><path d="M1 0L4 3L1 6Z" fill="#555" /></svg>
            </div>
          </div>
        </div>
        <div className="w-[3px] bg-[#efefef] pt-[18px]"><div className="h-2 border border-[#aaa] bg-white" /></div>
      </div>
    </section>
  );
}

const dropIcons: Glyph[] = [
  g("开", ["#fff3a0", ring(5, 4, 3), true], ["#c7a21b", ring(5, 4, 3)], ["#777", "M4 8H6"]),
  g("冻结", ["#ffe535", ring(5, 5, 4), true], ["#b99a1c", ring(5, 5, 4)]),
  g("视口", ["#c9dceb", ring(4, 4, 3), true], [BLUE, "M4 4H9V9H4Z"], ["#7ba7c9", ring(4, 4, 3)]),
  g("锁定", ["#f2e53a", "M2 4H8V9H2Z", true], ["#6d7a22", "M2 4H8V9H2ZM5 4V2C5 0 8 0 8 2V4"]),
  g("颜色", ["#23b60a", "M1 1H9V9H1Z", true], ["#333", "M1 1H9V9H1Z"]),
];

const stylesIcons: Glyph[] = [
  t("文字样式", "A", INK, 9, 8, [INK, "M5 9L9 3"], ["#8b3a1d", "M7 3L9.5 1V4Z", true]),
  g("标注样式管理", [INK, "M0 7V9M0 8.5H9M3 7L9 1"], [INK, "M4 6L9 1L8 7Z", true]),
  g("表格样式", [BLUE, "M1 2H8V9H1Z", true], ["#dcebfa", "M2 5H7V8H2Z", true], [INK, "M4 6L9 1"]),
];
const wsIcons: Glyph[] = [
  g("工作空间设置", ["#7f95ab", "M1 1H9V9H1Z", true], ["#26384c", ring(5, 5, 2.6)], ["#26384c", "M1 1L9 9M9 1L1 9"]),
  g("我的工作空间", [INK, "M2 3H8V9H2Z", true], [INK, "M1 2H3M5 1V3M7 2H9M1 5H9"]),
];
const layerIcons: Glyph[] = [
  g("图层特性", ["#a9cbe6", "M1 5L5 3L9 5L5 7Z", true], ["#5d86ab", "M1 3L5 1L9 3L5 5ZM1 5L5 7L9 5M1 7L5 9L9 7"]),
  g("置为当前", [BLUE, "M1 6L5 4L9 6L5 8Z", true], [GOLD, "M2 1H7L6 5Z", true], [NAVY, "M1 8L5 9.5L9 8"]),
  g("上一个图层", ["#8db3d3", ring(6, 5, 3.2), true], [NAVY, "M8 1L3 4L8 7M5 9H9"]),
];

export default function App() {
  return (
    <div className="flex h-screen flex-col overflow-hidden bg-[#f0f0f0] font-['Open_Sans','Noto_Sans_CJK_SC',sans-serif]">
      <nav className="flex h-[10px] shrink-0 items-center gap-1 border-b border-[#c9cfdf] bg-gradient-to-b from-[#f5f8fd] to-[#d5dcf0] font-['Roboto','Noto_Sans_CJK_SC',sans-serif] text-[7px] leading-none whitespace-nowrap text-[#111]">
        <svg viewBox="0 0 10 10" className="ml-px size-2 shrink-0" aria-hidden="true">
          <path d="M1 1L5 0L9 9H1Z" fill={GOLD} />
          <path d="M0 4L6 3L9 7L8 9H0Z" fill={BLUE} />
        </svg>
        <div className="flex flex-1 gap-[5px]">
          {MENUS.map((m) => <button key={m} type="button" className="shrink-0 hover:bg-white">{m}</button>)}
        </div>
        <div className="flex gap-px">
          {[["最小化", "M3 7H7"], ["还原", "M4 3H8V6H6M2 5H6V8H2Z"]].map(([name, d]) => (
            <button key={name} type="button" aria-label={name} className="size-[9px] border border-[#a9bccf] bg-[#dfeaf5]">
              <svg viewBox="0 0 10 10"><path d={d} fill="none" stroke="#5b6b7c" strokeWidth={1.4} /></svg>
            </button>
          ))}
        </div>
      </nav>

      <div className="flex h-4 shrink-0">
        <Toolbar>
          <span className="w-1" />
          {STANDARD.map((group, i) => (
            <div key={i} className="flex items-center">
              {i > 0 && i < 6 && <Divider />}
              {group.map((glyph) => (
                <ToolButton key={glyph.name} glyph={glyph} className={glyph.name.endsWith("列表") ? "w-2" : "w-3"} />
              ))}
            </div>
          ))}
        </Toolbar>
        <Toolbar>
          <Grip />
          <ToolButton glyph={stylesIcons[0]} className="w-3" />
          <Drop label="文字样式" options={["Standard"]} className="w-[52px]" />
          <Divider />
          <ToolButton glyph={stylesIcons[1]} className="w-3" />
          <Drop label="标注样式" options={["1.5"]} className="w-[52px]" />
          <Divider />
          <ToolButton glyph={stylesIcons[2]} className="w-3" />
          <Drop label="表格样式" options={["Standard"]} className="mr-px w-[52px]" />
        </Toolbar>
        <Toolbar>
          <Grip />
          {EXPRESS.map((glyph) => <ToolButton key={glyph.name} glyph={glyph} className="w-3" />)}
          <span className="w-[2px]" />
        </Toolbar>
      </div>

      <div className="flex h-[14px] shrink-0">
        <Toolbar>
          <Drop label="工作空间" options={["AutoCAD 经典"]} className="mr-[2px] ml-1 w-[91px] border-r-transparent" />
          {wsIcons.map((glyph) => <ToolButton key={glyph.name} glyph={glyph} className="w-3" />)}
          <span className="w-px" />
        </Toolbar>
        <Toolbar>
          <Grip />
          <ToolButton glyph={layerIcons[0]} className="mr-[2px] w-3" />
          <Drop label="图层" options={["dim"]} className="w-[155px]">
            <span className="mr-px flex w-[42px] justify-between">
              {dropIcons.map((glyph) => (
                <svg key={glyph.name} viewBox="0 0 10 10" className="size-2" aria-hidden="true">
                  {glyph.paths.map(([c, d, f], i) => <path key={i} d={d} fill={f ? c : "none"} stroke={f ? "none" : c} />)}
                </svg>
              ))}
            </span>
          </Drop>
          <ToolButton glyph={layerIcons[1]} className="w-3" />
          <ToolButton glyph={layerIcons[2]} className="w-3" />
        </Toolbar>
        <Toolbar>
          <Grip />
          <Drop label="颜色" options={["ByLayer"]} className="w-[79px]">
            <span className="size-[6px] border border-[#444] bg-[#23b60a]" />
          </Drop>
          <span className="w-[3px]" />
          <Drop label="线型" options={["ByLayer"]} className="w-[84px]">
            <span className="mr-px h-px w-8 bg-[#777]" />
          </Drop>
          <span className="w-[3px]" />
          <Drop label="线宽" options={["ByLayer"]} className="w-[66px]">
            <span className="mr-px h-px w-[19px] bg-[#777]" />
          </Drop>
          <span className="w-[3px]" />
          <Drop label="打印样式" options={["随颜色"]} className="mr-px w-[63px] bg-[#f7f7f7]" />
        </Toolbar>
      </div>

      <main className="flex min-h-0 flex-1">
        <aside className="flex shrink-0 items-start gap-0 border-r border-[#8a8a8a] pt-px">
          <div className="w-[9px]"><Palette groups={[DRAW]} /></div>
          <div className="w-[14px] pl-px"><Palette groups={[MODIFY]} /><div className="h-1" /><Palette groups={[ROTATE]} /></div>
          <div className="w-[14px] pl-px"><Palette groups={[YANXIU]} /></div>
          <div className="w-[14px] pl-px"><Palette groups={[TEXTTOOLS]} /><div className="h-1" /><Palette groups={[LAYOUTTOOLS]} /></div>
          <div className="w-[14px] pl-px"><Palette groups={DIM} /><div className="h-px" /><Palette groups={[HANZI]} /></div>
          <div className="w-[14px] pl-px"><Palette groups={[CARS]} /><div className="h-1" /><Palette groups={[SNAP]} /></div>
          <div className="w-[14px] pl-px"><Palette groups={[MOLD]} /></div>
        </aside>
        <div className="flex min-w-0 flex-1 flex-col">
          <div className="min-h-0 flex-1 border-t border-[#555] bg-black"><Drawing /></div>
          <LayoutTabs />
        </div>
        <div className="w-1 shrink-0 border-l border-[#d6d6d6] bg-[#fafafa] pt-[7px]"><div className="h-[5px] bg-[#777]" /></div>
      </main>

      <CommandWindow />
    </div>
  );
}
